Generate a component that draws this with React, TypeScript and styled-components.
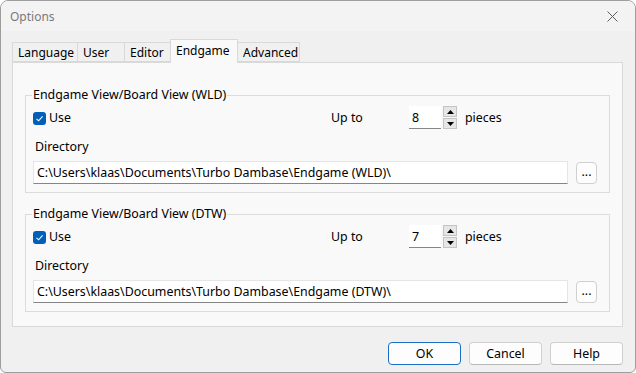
import styled, { createGlobalStyle } from 'styled-components';

const GlobalStyle = createGlobalStyle`
  html, body {
    margin: 0;
    padding: 0;
    background: #ffffff;
  }
  body {
    font-family: "Noto Sans", "Liberation Sans", sans-serif;
    font-size: 12.4px;
    color: #000000;
  }
`;

const tabs = ['Language', 'User', 'Editor', 'Endgame', 'Advanced'];
const tabWidths = [66, 48, 47, 68, 63];

const groups = [
  { title: 'Endgame View/Board View (WLD)', pieces: 8, path: 'C:\\Users\\klaas\\Documents\\Turbo Dambase\\Endgame (WLD)\\' },
  { title: 'Endgame View/Board View (DTW)', pieces: 7, path: 'C:\\Users\\klaas\\Documents\\Turbo Dambase\\Endgame (DTW)\\' }
];

const CheckIcon = () => (
  <svg width="9" height="9" viewBox="0 0 9 9">
    <path d="M1.5 4.8 L3.6 6.8 L7.6 2.4" fill="none" stroke="#ffffff" strokeWidth="1.1" />
  </svg>
);

const Arrow = ({ up }: { up?: boolean }) => (
  <svg width="7" height="4" viewBox="0 0 7 4">
    <path d={up ? 'M0 4 L3.5 0 L7 4 Z' : 'M0 0 L3.5 4 L7 0 Z'} fill="#000000" />
  </svg>
);

const OptionGroup = ({ title, pieces, path }: { title: string; pieces: number; path: string }) => (
  <Group>
    <legend>{title}</legend>
    <div className="top-row">
      <label className="use">
        <span className="checkbox">
          <CheckIcon />
        </span>
        Use
      </label>
      <span className="up-to">Up to</span>
      <div className="spin">
        <span className="spin-input">{pieces}</span>
        <span className="spin-buttons">
          <span className="spin-btn">
            <Arrow up />
          </span>
          <span className="spin-btn">
            <Arrow />
          </span>
        </span>
      </div>
      <span className="pieces">pieces</span>
    </div>
    <div className="dir-label">Directory</div>
    <div className="dir-row">
      <div className="path-input">{path}</div>
      <button className="browse">...</button>
    </div>
  </Group>
);

export default function App() {
  return (
    <>
      <GlobalStyle />
      <Window>
        <TitleBar>
          <span className="title">Options</span>
          <svg width="11" height="11" viewBox="0 0 11 11" className="close">
            <path d="M0.5 0.5 L10.5 10.5 M10.5 0.5 L0.5 10.5" stroke="#5c5c5c" strokeWidth="1" />
          </svg>
        </TitleBar>
        <Body>
          <TabStrip>
            {tabs.map((t, i) => (
              <Tab key={t} $active={t === 'Endgame'} style={{ width: tabWidths[i] }}>
                {t}
              </Tab>
            ))}
          </TabStrip>
          <Panel>
            {groups.map((g) => (
              <OptionGroup key={g.title} {...g} />
            ))}
          </Panel>
          <ButtonRow>
            <DialogButton $default>OK</DialogButton>
            <DialogButton>Cancel</DialogButton>
            <DialogButton>Help</DialogButton>
          </ButtonRow>
        </Body>
      </Window>
    </>
  );
}

const Window = styled.div`
  box-sizing: border-box;
  width: 636px;
  height: 373px;
  border: 1px solid #9d9d9d;
  border-radius: 8px 8px 6px 6px;
  background: #f0f0f0;
  overflow: hidden;
  display: flex;
  flex-direction: column;
`;

const TitleBar = styled.div`
  height: 30px;
  flex-shrink: 0;
  background: #f3f3f3;
  display: flex;
  align-items: center;
  justify-content: space-between;
  padding: 0 17px 0 9px;

  .title {
    color: #7a7a7a;
    font-size: 12px;
  }
`;

const Body = styled.div`
  flex: 1;
  display: flex;
  flex-direction: column;
  padding: 8px 12px 0 11px;
`;

const TabStrip = styled.div`
  display: flex;
  align-items: flex-end;
  height: 23px;
  padding-left: 1px;
  position: relative;
  z-index: 1;
`;

const Tab = styled.div<{ $active?: boolean }>`
  box-sizing: border-box;
  height: ${(p) => (p.$active ? '24px' : '20px')};
  margin-bottom: ${(p) => (p.$active ? '-1px' : '0')};
  margin-left: -1px;
  border: 1px solid #d9d9d9;
  border-bottom: ${(p) => (p.$active ? 'none' : '1px solid #d9d9d9')};
  background: ${(p) => (p.$active ? '#f9f9f9' : '#f0f0f0')};
  display: flex;
  align-items: center;
  padding-left: 5px;
  padding-bottom: ${(p) => (p.$active ? '3px' : '0')};
  font-size: 12px;
  white-space: nowrap;
`;

const Panel = styled.div`
  box-sizing: border-box;
  height: 265px;
  border: 1px solid #d9d9d9;
  background: #f9f9f9;
  padding: 24px 12px 0 12px;
  display: flex;
  flex-direction: column;
  gap: 13px;
`;

const Group = styled.fieldset`
  margin: 0;
  border: 1px solid #dcdcdc;
  padding: 3px 8px 8px 7px;
  min-width: 0;

  legend {
    padding: 0 1px;
    margin-left: -1px;
    line-height: 16px;
  }

  .top-row {
    display: flex;
    align-items: center;
    height: 23px;
  }

  .use {
    width: 298px;
    display: flex;
    align-items: center;
    gap: 3px;
  }

  .checkbox {
    width: 13px;
    height: 13px;
    margin-top: 2px;
    border-radius: 3px;
    background: #005fb8;
    display: flex;
    align-items: center;
    justify-content: center;
  }

  .up-to {
    width: 78px;
  }

  .spin {
    display: flex;
    align-items: center;
    gap: 2px;
  }

  .spin-input {
    box-sizing: border-box;
    width: 32px;
    height: 23px;
    background: #ffffff;
    border-bottom: 1px solid #868686;
    padding: 3px 0 0 3px;
  }

  .spin-buttons {
    display: flex;
    flex-direction: column;
    gap: 1px;
  }

  .spin-btn {
    box-sizing: border-box;
    width: 14px;
    height: 11px;
    border: 1px solid #c4c4c4;
    background: #e6e6e6;
    display: flex;
    align-items: center;
    justify-content: center;
  }

  .pieces {
    margin-left: 8px;
  }

  .dir-label {
    margin-top: 10px;
    padding-left: 2px;
    line-height: 16px;
  }

  .dir-row {
    margin-top: 6px;
    display: flex;
    align-items: center;
    gap: 8px;
  }

  .path-input {
    box-sizing: border-box;
    width: 535px;
    height: 23px;
    background: #ffffff;
    border: 1px solid #e5e5e5;
    border-bottom-color: #868686;
    padding: 2px 0 0 3px;
    white-space: nowrap;
  }

  .browse {
    box-sizing: border-box;
    width: 21px;
    height: 22px;
    border: 1px solid #d0d0d0;
    border-radius: 4px;
    background: #fdfdfd;
    font: inherit;
    padding: 0 0 4px;
    color: #000000;
  }
`;

const ButtonRow = styled.div`
  display: flex;
  justify-content: flex-end;
  gap: 8px;
  padding-top: 15px;
`;

const DialogButton = styled.button<{ $default?: boolean }>`
  box-sizing: border-box;
  width: 73px;
  height: 23px;
  border-radius: 4px;
  border: 1px solid ${(p) => (p.$default ? '#1a6fc4' : '#d0d0d0')};
  border-bottom-color: ${(p) => (p.$default ? '#1a6fc4' : '#b8b8b8')};
  background: #fdfdfd;
  font: inherit;
  color: #000000;
  padding: 0;
`;
